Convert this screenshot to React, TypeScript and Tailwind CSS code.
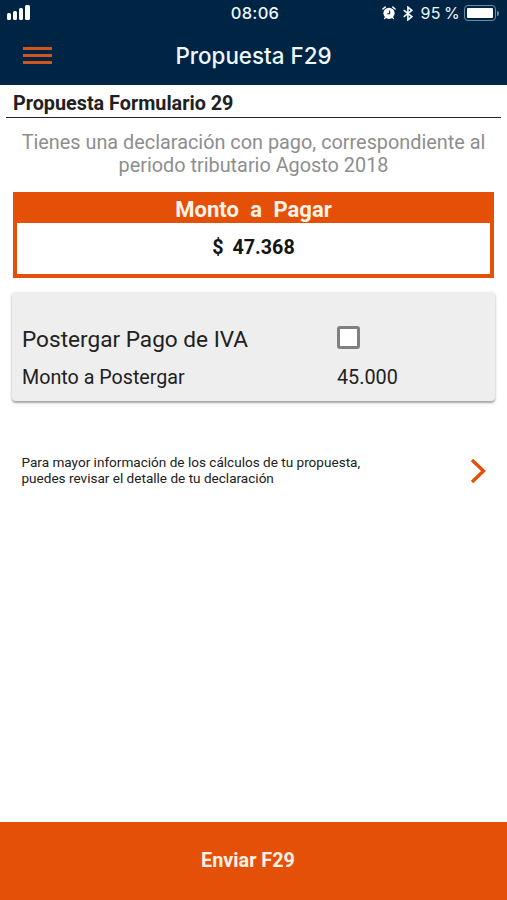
import React from "react";

function SignalBars() {
  return (
    <div className="flex h-[15px] items-end gap-[2px]">
      <span className="h-[7px] w-[4px] rounded-[1.5px] bg-white" />
      <span className="h-[9px] w-[4px] rounded-[1.5px] bg-white" />
      <span className="h-[12px] w-[4px] rounded-[1.5px] bg-white" />
      <span className="h-[15px] w-[5px] rounded-[1.5px] bg-white" />
    </div>
  );
}

function AlarmIcon() {
  return (
    <svg className="h-[14px] w-[14px]" viewBox="0 0 14 14" fill="none">
      <circle cx="7" cy="7.3" r="5.6" fill="#fff" />
      <path d="M0.9 3 3.2 1.1M13.1 3 10.8 1.1" stroke="#fff" strokeWidth="1.5" strokeLinecap="round" />
      <path d="m3.5 11.3-1 1.3M10.5 11.3l1 1.3" stroke="#fff" strokeWidth="1.3" strokeLinecap="round" />
      <path d="M7.6 4.6v3.2H5.2" stroke="#002544" strokeWidth="1.1" />
    </svg>
  );
}

function BluetoothIcon() {
  return (
    <svg className="h-[15px] w-[10px]" viewBox="0 0 10 15" fill="none">
      <path d="m0.7 4.2 8.1 6.4-3.9 3.3V1.1l3.9 3.3-8.1 6.4" stroke="#f2f8ff" strokeWidth="1.6" />
    </svg>
  );
}

function Battery() {
  return (
    <div className="flex items-center gap-[1px]">
      <div className="h-[16px] w-[32px] rounded-[4px] border border-[#6d8c9c] p-[2px]">
        <div className="h-full rounded-[1px] bg-white" />
      </div>
      <span className="h-[5px] w-[2px] rounded-r-[2px] bg-[#6d8c9c]" />
    </div>
  );
}

function StatusBar() {
  return (
    <div className="grid h-[26px] grid-cols-[1fr_auto_1fr] items-center font-['Inter',sans-serif] text-[#eef7ff]">
      <div className="pb-[1px] pl-[7px]">
        <SignalBars />
      </div>
      <span className="pl-[3px] text-[16.5px] leading-[26px] font-medium tracking-[0.3px]">08:06</span>
      <div className="flex items-center justify-end pr-[8px]">
        <AlarmIcon />
        <span className="ml-[7px]"><BluetoothIcon /></span>
        <span className="mr-[4px] ml-[8px] text-[16px] leading-[26px] tracking-[0.4px] whitespace-pre [word-spacing:-2px]">95 %</span>
        <Battery />
      </div>
    </div>
  );
}

export default function App() {
  return (
    <div className="flex h-[900px] w-[507px] flex-col overflow-hidden bg-white font-['Roboto',sans-serif] text-[#212121]">
      <header className="h-[85px] shrink-0 bg-[#002544]">
        <StatusBar />
        <div className="grid h-[58px] grid-cols-[1fr_auto_1fr] items-center">
          <button aria-label="Menú" className="ml-[23px] flex w-[29px] flex-col gap-[4px]">
            <span className="h-[3px] bg-[#d0561c]" />
            <span className="h-[3px] bg-[#d0561c]" />
            <span className="h-[3px] bg-[#d0561c]" />
          </button>
          <h1 className="pt-[1px] font-['Inter',sans-serif] text-[22.4px] leading-[28px] font-medium text-[#eef7ff]">Propuesta F29</h1>
        </div>
      </header>

      <main className="flex flex-1 flex-col">
        <h2 className="mr-[6px] ml-[6px] h-[33px] border-b-[1.5px] border-[#2a2426] pl-[7px] text-[19.8px] leading-[38px] font-bold">
          Propuesta Formulario 29
        </h2>
        <p className="mt-[13px] text-center text-[19.85px] leading-[23px] text-[#8e8e8e]">
          Tienes una declaración con pago, correspondiente al
          <br />
          periodo tributario Agosto 2018
        </p>

        <section className="mt-[15px] ml-[13px] flex h-[86px] w-[481px] flex-col border-4 border-t-0 border-[#e55009] text-center">
          <h3 className="h-[31px] bg-[#e55009] text-[22px] leading-[36px] font-bold text-[#fff3e8] [word-spacing:6px]">Monto a Pagar</h3>
          <p className="text-[19.7px] leading-[50px] font-bold text-[#151515] [word-spacing:4px]">$ 47.368</p>
        </section>

        <section className="mt-[14px] ml-[12px] grid h-[109px] w-[483px] grid-cols-[315px_1fr] rounded-[4px] bg-[#eeeeee] pt-[28px] pl-[10px] shadow-[0_2px_2px_rgba(0,0,0,0.3),0_1px_4px_rgba(0,0,0,0.12)] [grid-template-rows:38px_38px]">
          <span className="text-[22.6px] leading-[40px]">Postergar Pago de IVA</span>
          <span role="checkbox" aria-checked="false" aria-label="Postergar Pago de IVA" className="mt-[6px] h-[23px] w-[23px] rounded-[3px] border-3 border-[#808080] bg-white" />
          <span className="text-[19.7px] leading-[40px]">Monto a Postergar</span>
          <span className="text-[19.8px] leading-[40px]">45.000</span>
        </section>

        <section className="mt-[54px] flex items-center justify-between pr-[20px] pl-[21.5px]">
          <p className="text-[13.57px] leading-[15.5px]">
            Para mayor información de los cálculos de tu propuesta,
            <br />
            puedes revisar el detalle de tu declaración
          </p>
          <svg className="h-[26px] w-[17px]" viewBox="0 0 17 26" fill="none">
            <path d="m2 2 11.5 11L2 24" stroke="#e55009" strokeWidth="3.4" />
          </svg>
        </section>
      </main>

      <button className="h-[78px] shrink-0 bg-[#e55009] pr-[11px] text-[19.8px] leading-[78px] font-bold text-[#fff0e6]">
        Enviar F29
      </button>
    </div>
  );
}
